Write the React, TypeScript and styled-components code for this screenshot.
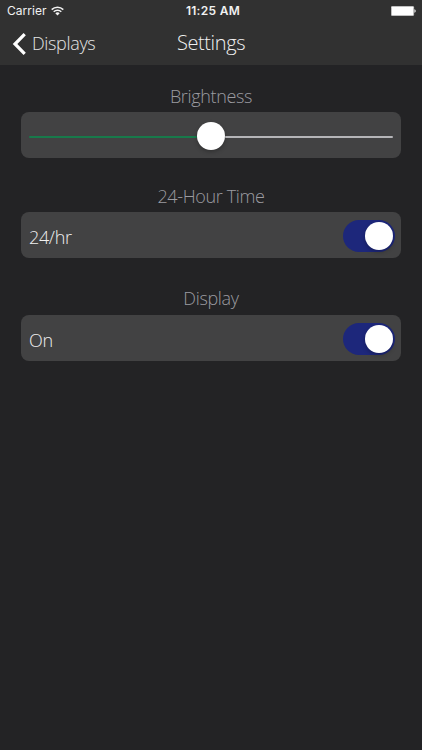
import React from "react";
import styled, { createGlobalStyle } from "styled-components";

const GlobalStyle = createGlobalStyle`
  * { box-sizing: border-box; }
  body { margin: 0; background: #232325; }
`;

const Screen = styled.div`
  height: 750px;
  background: #232325;
  font-family: "Open Sans", sans-serif;
  font-weight: 300;
  color: #f0f0f0;
  overflow: hidden;
`;

const Header = styled.header`
  height: 65px;
  background: #313131;
`;

const Columns = styled.div`
  display: grid;
  grid-template-columns: 1fr auto 1fr;
  align-items: center;
`;

const StatusBar = styled(Columns)`
  height: 22px;
  padding: 0 6px 0 7px;
  font-family: Inter, sans-serif;
  font-size: 12px;
  line-height: 22px;
  font-weight: 400;
  color: #f2f2f2;
`;

const Carrier = styled.div`
  display: flex;
  align-items: center;
  gap: 4px;
  letter-spacing: 0.05px;
`;

const Clock = styled.div`
  font-weight: 600;
  letter-spacing: 0.3px;
  padding-left: 3px;
`;

const Battery = styled.svg`
  justify-self: end;
`;

const NavBar = styled(Columns)`
  height: 43px;
  padding: 0 12px;
`;

const BackButton = styled.button`
  display: flex;
  align-items: center;
  gap: 5px;
  padding: 0;
  border: 0;
  background: none;
  font: inherit;
  font-size: 18px;
  letter-spacing: -0.35px;
  line-height: 42px;
  color: #e4e4e4;
`;

const BackText = styled.span`
  height: 43px;
`;

const Title = styled.h1`
  margin: 0;
  font-size: 20px;
  letter-spacing: -0.4px;
  line-height: 42px;
  font-weight: 300;
  height: 43px;
`;

const Content = styled.main`
  padding: 16px 21px 0;
`;

const Section = styled.section<{ $gap: number }>`
  margin-bottom: ${(p) => p.$gap}px;
`;

const Label = styled.h2<{ $raise?: number }>`
  margin: 0 0 1px;
  height: 30px;
  line-height: ${(p) => 30 - 2 * (p.$raise ?? 0)}px;
  font-size: 18px;
  letter-spacing: -0.35px;
  font-weight: 300;
  text-align: center;
  color: #9b9ba1;
`;

const Panel = styled.div`
  display: flex;
  align-items: center;
  justify-content: space-between;
  height: 46px;
  padding: 0 6px 0 8px;
  border-radius: 8px;
  background: #424243;
  font-size: 18px;
  letter-spacing: -0.35px;
`;

const RowText = styled.span`
  padding-top: 3px;
  line-height: 24px;
`;

const Slider = styled.div`
  display: flex;
  align-items: center;
  flex: 1;
  padding: 3px 2px 0 0;
`;

const Track = styled.div<{ $color: string }>`
  flex: 1;
  height: 2px;
  border-radius: 1px;
  background: ${(p) => p.$color};
`;

const Knob = styled.div`
  width: 28px;
  height: 28px;
  border-radius: 50%;
  background: #fff;
  box-shadow: 0 2px 4px rgba(0, 0, 0, 0.25);
`;

const SliderKnob = styled(Knob)`
  margin-top: -2px;
`;

const Switch = styled.div`
  display: flex;
  align-items: center;
  justify-content: flex-end;
  width: 52px;
  height: 32px;
  margin-top: 2px;
  padding-right: 2px;
  border-radius: 16px;
  background: #1d277b;
`;

function ToggleSection({ label, text, gap, raise }: { label: string; text: string; gap: number; raise?: number }) {
  return (
    <Section $gap={gap}>
      <Label $raise={raise}>{label}</Label>
      <Panel>
        <RowText>{text}</RowText>
        <Switch role="switch" aria-checked="true" aria-label={label}>
          <Knob />
        </Switch>
      </Panel>
    </Section>
  );
}

export default function App() {
  return (
    <Screen>
      <GlobalStyle />
      <Header>
        <StatusBar>
          <Carrier>
            Carrier
            <svg width="13" height="10" viewBox="0 0 13 10" fill="none" stroke="#f2f2f2" strokeWidth="1.5">
              <path d="M.7 3.6a8.2 8.2 0 0 1 11.6 0M2.7 5.8a5.4 5.4 0 0 1 7.6 0" />
              <path d="M4.3 7.3a3.1 3.1 0 0 1 4.4 0L6.5 9.5z" fill="#f2f2f2" stroke="none" />
            </svg>
          </Carrier>
          <Clock>11:25 AM</Clock>
          <Battery width="25" height="10" viewBox="0 0 25 10">
            <rect x="0.25" y="0.25" width="22.5" height="9.5" rx="1" fill="#fff" stroke="#aaa" strokeWidth="0.5" />
            <path d="M23.3 3.2c2 .4 2 3.2 0 3.6z" fill="#ddd" />
          </Battery>
        </StatusBar>
        <NavBar>
          <BackButton>
            <svg width="15" height="22" viewBox="0 0 15 22" fill="none" stroke="#fff" strokeWidth="3.2">
              <path d="M12.7 1.2 3 11l9.7 9.8" />
            </svg>
            <BackText>Displays</BackText>
          </BackButton>
          <Title>Settings</Title>
        </NavBar>
      </Header>
      <Content>
        <Section $gap={23}>
          <Label>Brightness</Label>
          <Panel>
            <Slider>
              <Track $color="#187a4b" />
              <SliderKnob />
              <Track $color="#b5b5b8" />
            </Slider>
          </Panel>
        </Section>
        <ToggleSection label="24-Hour Time" text="24/hr" gap={26} />
        <ToggleSection label="Display" text="On" gap={0} raise={1} />
      </Content>
    </Screen>
  );
}
